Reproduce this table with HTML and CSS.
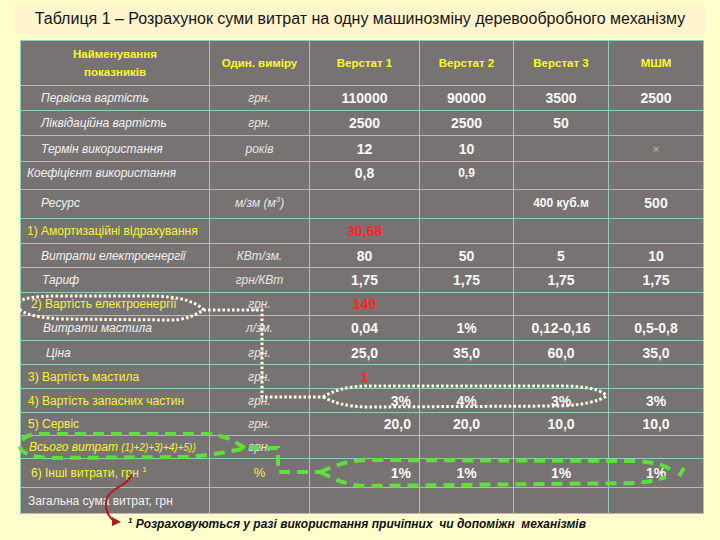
FILE: index.html
```html
<!DOCTYPE html>
<html lang="uk">
<head>
<meta charset="utf-8">
<title>Таблиця 1</title>
<link rel="stylesheet" href="styles.css">
</head>
<body>
<div class="page">
  <div class="title">Таблиця 1 – Розрахунок суми витрат на одну машинозміну деревообробного механізму</div>
  <table class="calc">
    <colgroup>
      <col class="c-name"><col class="c-unit"><col class="c-v1"><col class="c-v2"><col class="c-v3"><col class="c-v4">
    </colgroup>
    <thead>
      <tr class="head">
        <th>Найменування<br>показників</th>
        <th>Один. виміру</th>
        <th>Верстат 1</th>
        <th>Верстат 2</th>
        <th>Верстат 3</th>
        <th>МШМ</th>
      </tr>
    </thead>
    <tbody>
      <tr class="h25">
        <td class="nm it p20">Первісна вартість</td><td class="un">грн.</td>
        <td class="v">110000</td><td class="v">90000</td><td class="v">3500</td><td class="v">2500</td>
      </tr>
      <tr class="h25">
        <td class="nm it p20">Ліквідаційна вартість</td><td class="un">грн.</td>
        <td class="v">2500</td><td class="v">2500</td><td class="v">50</td><td class="v"></td>
      </tr>
      <tr class="h26">
        <td class="nm it p20">Термін використання</td><td class="un">років</td>
        <td class="v">12</td><td class="v">10</td><td class="v"></td><td class="v"><span class="cross">×</span></td>
      </tr>
      <tr class="h28 up">
        <td class="nm it p6">Коефіцієнт використання</td><td class="un"></td>
        <td class="v">0,8</td><td class="v sm">0,9</td><td class="v"></td><td class="v"></td>
      </tr>
      <tr class="h29 up2">
        <td class="nm it p20">Ресурс</td><td class="un">м/зм (м<sup>3</sup>)</td>
        <td class="v"></td><td class="v"></td><td class="v sm">400 куб.м</td><td class="v">500</td>
      </tr>
      <tr class="h25">
        <td class="nm yl p6">1) Амортизаційні відрахування</td><td class="un"></td>
        <td class="v red">30,68</td><td class="v"></td><td class="v"></td><td class="v"></td>
      </tr>
      <tr class="h24">
        <td class="nm it p20">Витрати електроенергії</td><td class="un">КВт/зм.</td>
        <td class="v">80</td><td class="v">50</td><td class="v">5</td><td class="v">10</td>
      </tr>
      <tr class="h25">
        <td class="nm it p21">Тариф</td><td class="un">грн/КВт</td>
        <td class="v">1,75</td><td class="v">1,75</td><td class="v">1,75</td><td class="v">1,75</td>
      </tr>
      <tr class="h23">
        <td class="nm yl p10">2) Вартість електроенергії</td><td class="un">грн.</td>
        <td class="v red">140</td><td class="v"></td><td class="v"></td><td class="v"></td>
      </tr>
      <tr class="h25">
        <td class="nm it p22">Витрати мастила</td><td class="un">л/зм.</td>
        <td class="v">0,04</td><td class="v">1%</td><td class="v">0,12-0,16</td><td class="v">0,5-0,8</td>
      </tr>
      <tr class="h24">
        <td class="nm it p25">Ціна</td><td class="un">грн.</td>
        <td class="v">25,0</td><td class="v">35,0</td><td class="v">60,0</td><td class="v">35,0</td>
      </tr>
      <tr class="h24">
        <td class="nm yl p7">3) Вартість мастила</td><td class="un">грн.</td>
        <td class="v red">1</td><td class="v"></td><td class="v"></td><td class="v"></td>
      </tr>
      <tr class="h24">
        <td class="nm yl p7">4) Вартість запасних частин</td><td class="un">грн.</td>
        <td class="v vr">3%</td><td class="v">4%</td><td class="v">3%</td><td class="v">3%</td>
      </tr>
      <tr class="h23">
        <td class="nm yl p7">5) Сервіс</td><td class="un">грн.</td>
        <td class="v vr">20,0</td><td class="v">20,0</td><td class="v">10,0</td><td class="v">10,0</td>
      </tr>
      <tr class="h23">
        <td class="nm yl it p8">Всього витрат <span class="small">(1)+2)+3)+4)+5))</span></td><td class="un">грн.</td>
        <td class="v"></td><td class="v"></td><td class="v"></td><td class="v"></td>
      </tr>
      <tr class="h29">
        <td class="nm yl p10">6) Інші витрати, грн <sup>1</sup></td><td class="un pct">%</td>
        <td class="v vr">1%</td><td class="v">1%</td><td class="v">1%</td><td class="v">1%</td>
      </tr>
      <tr class="h26">
        <td class="nm p7">Загальна сума витрат, грн</td><td class="un"></td>
        <td class="v"></td><td class="v"></td><td class="v"></td><td class="v"></td>
      </tr>
    </tbody>
  </table>
  <div class="foot"><sup>1</sup> Розраховуються у разі використання причіпних&nbsp; чи допоміжн&nbsp; механізмів</div>

  <svg class="overlay" width="720" height="540" viewBox="0 0 720 540">
    <g fill="none" stroke="#fffbe0" stroke-width="3" stroke-dasharray="2.6 2.2">
      <path d="M204,310 C196,302 180,296 150,296 L60,296 C30,296 18,299 18,305 C18,312 30,317 60,319 L170,320 C188,320 196,314 204,310 L262,310 L262,397 L323,397"/>
      <path d="M323,397 C335,390 345,387 365,386 L560,386 C585,386 600,389 607,396"/>
      <path d="M323,397 C335,403 345,406 365,407 L560,406 C585,405 598,401 607,396"/>
    </g>
    <g fill="none" stroke="#5ee03c" stroke-width="4" stroke-dasharray="11 7">
      <path d="M245,448 C232,440 222,434 205,434 L40,434 C26,434 20,440 20,446 C20,452 30,457 50,458 L185,457 C205,456 230,452 245,448 L278,448 L278,472 L320,472"/>
      <path d="M320,472 C335,466 345,461 365,460 L635,461 C655,462 668,466 672,471"/>
      <path d="M320,472 C335,479 345,485 365,486 L635,483 C648,482 658,480 666,477"/>
      <path d="M679,476 L684,468" stroke-dasharray="none"/>
    </g>
    <path d="M132,474 C128,486 110,488 107,498 C104,508 108,516 114,521" fill="none" stroke="#b01c1c" stroke-width="2"/>
    <path d="M112,517 L121,522 L112,526 Z" fill="#b01c1c"/>
  </svg>
</div>
</body>
</html>
```

FILE: styles.css
```css
body {
  margin: 0;
  background: #ffffcc;
  font-family: "Liberation Sans", Arial, sans-serif;
}

.page {
  position: relative;
  width: 720px;
  height: 540px;
  padding-top: 5px;
  box-sizing: border-box;
}

.title {
  margin: 0 15px;
  height: 28px;
  line-height: 28px;
  background: #fff4cc;
  text-align: center;
  font-size: 16px;
  color: #151515;
}

.calc {
  margin: 7px 0 0 20px;
  border-collapse: collapse;
  table-layout: fixed;
  width: 683px;
  background: #787373;
  border: 1px solid #6c6767;
}

.c-name { width: 189px; }
.c-unit { width: 100px; }
.c-v1 { width: 110px; }
.c-v2 { width: 94px; }
.c-v3 { width: 95px; }
.c-v4 { width: 95px; }

.calc th,
.calc td {
  border: 1px solid #8fcfb7;
  padding: 0;
  line-height: 14px;
  vertical-align: middle;
}

.head { height: 45px; }
.head th {
  color: #f8f82a;
  font-size: 11.5px;
  font-weight: bold;
  line-height: 18px;
  text-align: center;
}

.h23 { height: 23px; }
.h24 { height: 24px; }
.h25 { height: 25px; }
.h26 { height: 26px; }
.h28 { height: 28px; }
.h29 { height: 29px; }

.calc .up td { padding-bottom: 6px; }
.calc .up2 td { padding-bottom: 3px; }

.nm {
  color: #f2f2f2;
  font-size: 12px;
  white-space: nowrap;
}
.it { font-style: italic; }
.yl { color: #f4f43a; }

.calc td.p6 { padding-left: 6px; }
.calc td.p7 { padding-left: 7px; }
.calc td.p8 { padding-left: 8px; }
.calc td.p10 { padding-left: 10px; }
.calc td.p20 { padding-left: 20px; }
.calc td.p21 { padding-left: 21px; }
.calc td.p22 { padding-left: 22px; }
.calc td.p25 { padding-left: 25px; }

.small { font-size: 10px; }

.nm sup,
.un sup {
  font-size: 8px;
  line-height: 0;
}

.un {
  color: #e6e6e6;
  font-style: italic;
  font-size: 12px;
  text-align: center;
}
.un.pct {
  color: #f4f43a;
  font-style: normal;
  font-size: 13px;
}

.v {
  color: #f8f8f8;
  font-size: 14px;
  font-weight: bold;
  text-align: center;
}
.v.sm { font-size: 12px; }
.v.red { color: #ff2424; }
.calc td.vr {
  text-align: right;
  padding-right: 8px;
}

.cross {
  color: #c9c97a;
  font-size: 11px;
  font-weight: normal;
}

.foot {
  margin-top: 2px;
  padding-left: 128px;
  font-size: 12px;
  font-weight: bold;
  font-style: italic;
  color: #111;
  line-height: 16px;
}
.foot sup {
  font-size: 8px;
  line-height: 0;
}

.overlay {
  position: absolute;
  left: 0;
  top: 0;
  pointer-events: none;
}
```
